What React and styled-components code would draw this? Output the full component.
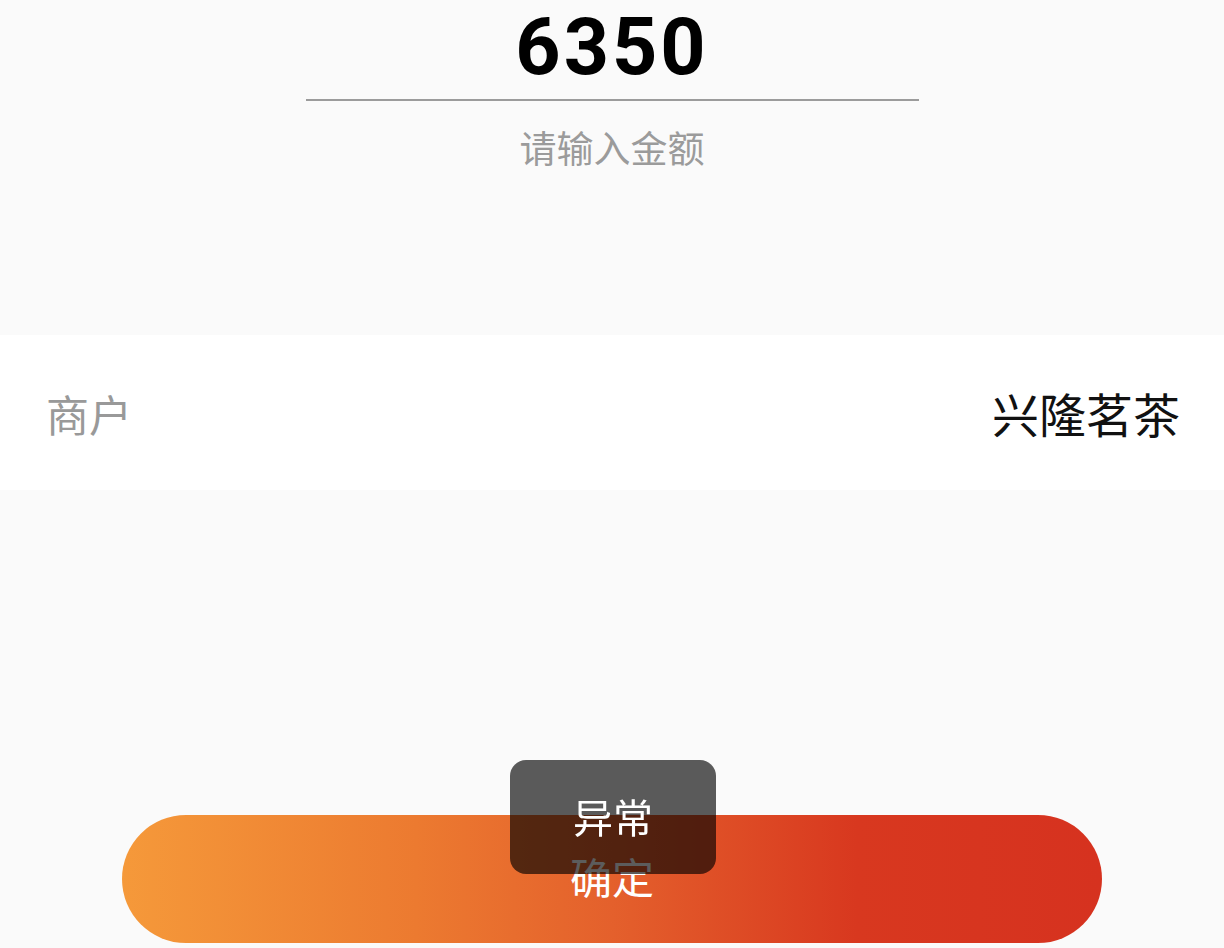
import React from 'react';
import styled, { createGlobalStyle } from 'styled-components';

const GlobalStyle = createGlobalStyle`
  html, body {
    margin: 0;
    padding: 0;
    background: #fafafa;
  }
  body {
    font-family: Roboto, "Noto Sans CJK SC", sans-serif;
  }
`;

const Page = styled.div`
  height: 948px;
  display: flex;
  flex-direction: column;
  background: #fafafa;
  overflow: hidden;
`;

const AmountBlock = styled.div`
  height: 335px;
  display: flex;
  flex-direction: column;
  align-items: center;
  padding-top: 3px;
  box-sizing: border-box;
`;

const AmountInput = styled.div`
  width: 613px;
  padding-bottom: 8px;
  border-bottom: 2px solid #9b9b9b;
  text-align: center;
  font-family: Roboto, sans-serif;
  font-weight: 700;
  font-size: 79px;
  line-height: 88px;
  letter-spacing: 3px;
  color: #000;
`;

const Hint = styled.div`
  margin-top: 24px;
  font-family: "Noto Sans CJK SC", sans-serif;
  font-size: 37px;
  line-height: 44px;
  color: #9b9b9b;
`;

const InfoRow = styled.div`
  height: 155px;
  display: flex;
  align-items: center;
  justify-content: space-between;
  padding: 0 44px 0 46px;
  background: #fff;
  font-family: "Noto Sans CJK SC", sans-serif;
`;

const Label = styled.span`
  font-size: 43px;
  color: #999;
`;

const Value = styled.span`
  font-size: 47px;
  color: #111;
`;

const Footer = styled.div`
  flex: 1;
  display: flex;
  align-items: flex-end;
  justify-content: center;
  padding-bottom: 5px;
`;

const ConfirmButton = styled.button`
  width: 980px;
  height: 128px;
  padding: 0 0 8px;
  border: none;
  border-radius: 64px;
  background: linear-gradient(90deg, #f5993a 0%, #ec7a30 30%, #e4602c 50%, #d8381f 75%, #d6321f 100%);
  color: #fff;
  font-family: "Noto Sans CJK SC", sans-serif;
  font-size: 42px;
  cursor: pointer;
`;

const Toast = styled.div`
  position: fixed;
  top: 760px;
  left: calc(50% + 1px);
  transform: translateX(-50%);
  width: 206px;
  height: 114px;
  padding-bottom: 3px;
  box-sizing: border-box;
  border-radius: 16px;
  background: rgba(0, 0, 0, 0.64);
  display: flex;
  align-items: center;
  justify-content: center;
  color: #fff;
  font-family: "Noto Sans CJK SC", sans-serif;
  font-size: 40px;
`;

const App = () => {
  return (
    <>
      <GlobalStyle />
      <Page>
        <AmountBlock>
          <AmountInput>6350</AmountInput>
          <Hint>请输入金额</Hint>
        </AmountBlock>
        <InfoRow>
          <Label>商户</Label>
          <Value>兴隆茗茶</Value>
        </InfoRow>
        <Footer>
          <ConfirmButton>确定</ConfirmButton>
        </Footer>
      </Page>
      <Toast>异常</Toast>
    </>
  );
};

export default App;
